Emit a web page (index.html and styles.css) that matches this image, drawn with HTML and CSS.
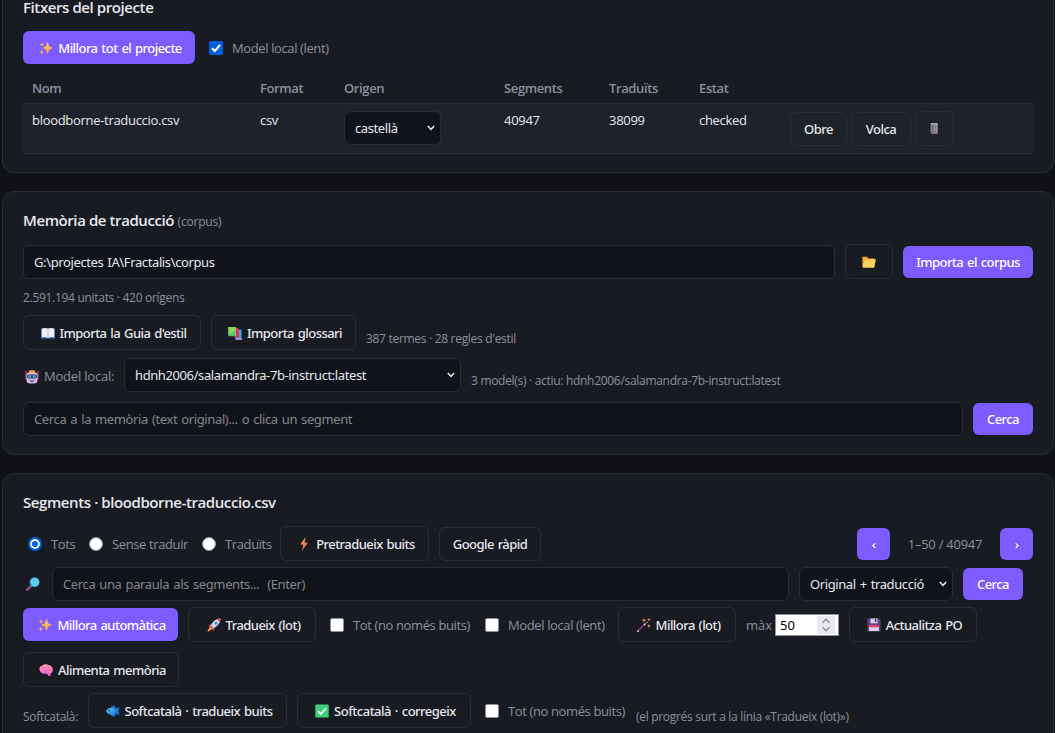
FILE: index.html
```html
<!DOCTYPE html>
<html lang="ca">
<head>
<meta charset="utf-8">
<title>Fractalis</title>
<link rel="stylesheet" href="styles.css">
</head>
<body>
<svg class="defs" width="0" height="0" aria-hidden="true">
  <defs>
    <linearGradient id="gold" x1="0" y1="0" x2="0" y2="1"><stop offset="0" stop-color="#ffce4d"/><stop offset="1" stop-color="#fb9a55"/></linearGradient>
    <linearGradient id="bolt" x1="0" y1="0" x2="0" y2="1"><stop offset="0" stop-color="#ffb13d"/><stop offset="1" stop-color="#f4504a"/></linearGradient>
    <linearGradient id="pink" x1="0" y1="0" x2="0" y2="1"><stop offset="0" stop-color="#ff9fb4"/><stop offset="1" stop-color="#f45fd0"/></linearGradient>
    <linearGradient id="blue" x1="0" y1="0" x2="1" y2="1"><stop offset="0" stop-color="#4fc3f7"/><stop offset="1" stop-color="#1e78d8"/></linearGradient>
  </defs>
  <symbol id="sparkles" viewBox="0 0 14 14"><g fill="url(#gold)"><path d="M8.600.6 10.200 5.200 14 7 10.200 8.700 8.600 13.200 6.900 8.700 3.200 7 6.900 5.200Z"/><path d="M3 1.2 3.6 3 5.4 3.6 3.6 4.2 3 6 2.4 4.2.6 3.6 2.4 3Z"/><path d="M2.8 8.8 3.5 10.5 5.2 11.1 3.5 11.8 2.8 13.5 2.1 11.8.5 11.1 2.1 10.5Z"/></g></symbol>
  <symbol id="chevron" viewBox="0 0 8 6"><path d="M.8 1 4 4.3 7.2 1" fill="none" stroke="#e6e8ee" stroke-width="1.5"/></symbol>
</svg>

<section class="card card-files">
  <h2 class="title">Fitxers del projecte</h2>
  <div class="row files-actions">
    <button class="btn primary w172"><svg class="ico"><use href="#sparkles"/></svg><span>Millora tot el projecte</span></button>
    <label class="check"><input type="checkbox" class="box" checked><span>Model local (lent)</span></label>
  </div>
  <table class="files">
    <colgroup><col class="c1"><col class="c2"><col class="c3"><col class="c4"><col class="c5"><col class="c6"><col class="c7"></colgroup>
    <thead><tr><th>Nom</th><th>Format</th><th>Origen</th><th>Segments</th><th>Traduïts</th><th>Estat</th><th></th></tr></thead>
    <tbody><tr>
      <td>bloodborne-traduccio.csv</td><td>csv</td>
      <td><div class="select w97"><span>castellà</span><svg class="chev"><use href="#chevron"/></svg></div></td>
      <td>40947</td><td>38099</td><td>checked</td>
      <td><div class="cell-btns"><button class="btn w57">Obre</button><button class="btn w60">Volca</button><button class="btn tall w39"><svg class="ico" viewBox="0 0 14 14"><rect x="2.700" y="1.200" width="7.300" height="10.800" rx="1.200" fill="#77737c"/><path d="M2.800 1.900h7" stroke="#c4c0c7" stroke-width="1.2"/><path d="M4.300 3.300v7.700" stroke="#b452a0" stroke-width="1.400"/><path d="M6.500 3.300V11M8.300 3.300V11" stroke="#a9aaa8" stroke-width=".8"/><path d="M3 3v7" stroke="#41a7b8" stroke-width=".7"/></svg></button></div></td>
    </tr></tbody>
  </table>
</section>

<section class="card card-memory">
  <h2 class="title">Memòria de traducció <small>(corpus)</small></h2>
  <div class="row path-row">
    <input class="field grow" type="text" value="G:\projectes IA\Fractalis\corpus">
    <button class="btn tall w48"><svg class="ico" viewBox="0 0 14 14"><path d="M.4 1.8h4.7l1.4 1.6h6V12H.4Z" fill="#f3a72e"/><path d="M2.3 5.2 7 4.3h6.9L12.1 12.8H.6Z" fill="#ffd161"/></svg></button>
    <button class="btn primary flat w130">Importa el corpus</button>
  </div>
  <p class="note units">2.591.194 unitats · 420 orígens</p>
  <div class="row guide-row">
    <button class="btn tall w178"><svg class="ico" viewBox="0 0 14 14"><path d="M0 3h14v9.6H0Z" fill="#2c7bd0"/><path d="M.8 2.400Q4 1.400 7 2.600q3-1.200 6.200-.2v8.800q-3.200-.8-6.200.5Q4 10.400.8 11.200Z" fill="#f2eef8"/><path d="M7 2.600v9" stroke="#bdb3cd" stroke-width=".8"/></svg><span>Importa la Guia d'estil</span></button>
    <button class="btn tall w145"><svg class="ico" viewBox="0 0 14 14"><path d="M6 4l7.500-.5V13H7Z" fill="#3ba5e8"/><path d="M9 12h5v2H7Z" fill="#9a8bdc"/><path d="M6 2.500 10.300 1.800 11.500 11 7 12Z" fill="#e6305c"/><path d="M0 1h8v9.200H1.500L0 9Z" fill="#5fc46b"/><path d="M1 1h7v3L2 8Z" fill="#8fd65b"/></svg><span>Importa glossari</span></button>
    <span class="note sink">387 termes · 28 regles d'estil</span>
  </div>
  <div class="row model-row">
    <span class="model-label"><svg class="ico" viewBox="0 0 14 14"><path d="M1 1v5M13 1v5" stroke="#d63d6a" stroke-width="1.300"/><rect x=".3" y="5.500" width="13.400" height="4" rx="1.500" fill="#d3416f"/><rect x="1.500" y="2" width="11" height="11.500" rx="3.500" fill="#cdb9e2"/><rect x="4" y=".3" width="6" height="2.700" rx="1.200" fill="#f5a63b"/><rect x="2" y="4.500" width="10" height="4" rx="1.800" fill="#35466f"/><circle cx="4.800" cy="6.400" r="1.200" fill="#4dc8ef"/><circle cx="9.200" cy="6.400" r="1.200" fill="#4dc8ef"/><path d="M5 11h4" stroke="#453450" stroke-width="1.200"/></svg><span>Model local:</span></span>
    <div class="select w337"><span>hdnh2006/salamandra-7b-instruct:latest</span><svg class="chev"><use href="#chevron"/></svg></div>
    <span class="note sink">3 model(s) · actiu: hdnh2006/salamandra-7b-instruct:latest</span>
  </div>
  <div class="row">
    <input class="field grow" type="text" placeholder="Cerca a la memòria (text original)... o clica un segment">
    <button class="btn primary flat w60">Cerca</button>
  </div>
</section>

<section class="card card-segments">
  <h2 class="title">Segments · bloodborne-traduccio.csv</h2>
  <div class="row filter-row">
    <label class="check w51"><input type="radio" name="f" class="dot" checked><span>Tots</span></label>
    <label class="check w103"><input type="radio" name="f" class="dot"><span>Sense traduir</span></label>
    <label class="check w73"><input type="radio" name="f" class="dot"><span>Traduïts</span></label>
    <button class="btn tall w149"><svg class="ico" viewBox="0 0 14 14"><path d="M8.700 0 3.200 7.500h3L5 14l5.800-8.300H7.500Z" fill="url(#bolt)"/></svg><span>Pretradueix buits</span></button>
    <button class="btn w102">Google ràpid</button>
    <span class="grow"></span>
    <div class="pager"><button class="btn primary flat w33">‹</button><span>1–50 / 40947</span><button class="btn primary flat w33">›</button></div>
  </div>
  <div class="row search-row">
    <svg class="ico lens" viewBox="0 0 14 14"><path d="M6 8 1.200 12.800" stroke="#80508d" stroke-width="2.600" stroke-linecap="round"/><circle cx="8.600" cy="5.300" r="5" fill="#3b94bd"/><circle cx="8.800" cy="5.100" r="4.200" fill="#5fcdec"/></svg>
    <input class="field grow" type="text" placeholder="Cerca una paraula als segments...  (Enter)">
    <div class="select w154"><span>Original + traducció</span><svg class="chev"><use href="#chevron"/></svg></div>
    <button class="btn primary flat w60">Cerca</button>
  </div>
  <div class="row batch-row">
    <button class="btn primary w155"><svg class="ico"><use href="#sparkles"/></svg><span>Millora automàtica</span></button>
    <button class="btn tall w128"><svg class="ico" viewBox="0 0 14 14"><path d="M4 6 1 7.500 3 9ZM8 10l-1.500 3.300L5 11Z" fill="#cc3158"/><path d="M13.600.4C9 .4 5 3.500 3 9l2 2c5-2 8.600-6 8.600-10.600Z" fill="#d9d2e3"/><path d="M13.600.4 9.900 1.400l2.800 2.700Z" fill="#ef3e68"/><circle cx="9" cy="5.300" r="1.500" fill="#3c8fd0"/><path d="M3 8.500 5.300 11 1 13.700l-.5-.5Z" fill="#ff9a34"/><path d="M5.500 8.500 4 10" stroke="#cc3158" stroke-width="1.500"/></svg><span>Tradueix (lot)</span></button>
    <label class="check w145"><input type="checkbox" class="box"><span>Tot (no només buits)</span></label>
    <label class="check w127"><input type="checkbox" class="box"><span>Model local (lent)</span></label>
    <button class="btn tall w118"><svg class="ico" viewBox="0 0 14 14"><path d="M.8 13.200 8 6" stroke="#7d397e" stroke-width="1.700"/><path d="M.3 13.700 1.500 12.500M7 7l1.500-1.500" stroke="#d5cadb" stroke-width="1.700"/><g fill="#f3a650"><path d="m7 0 .6 1.700 1.700.5-1.700.6L7 4.500l-.6-1.700-1.700-.6 1.700-.5ZM12 0l.5 1.300 1.300.5-1.300.5L12 3.600l-.5-1.300-1.300-.5 1.300-.5ZM11.800 6l.6 1.400 1.500.5-1.500.6-.6 1.500-.5-1.500-1.500-.6 1.500-.5Z"/><circle cx="10" cy="4.500" r=".8"/></g></svg><span>Millora (lot)</span></button>
    <label class="max"><span>màx</span><span class="number"><span>50</span><span class="spin"><svg viewBox="0 0 18 18"><path d="M5.500 6.700 9 3.300l3.500 3.400M5.500 11.300 9 14.700l3.500-3.400" fill="none" stroke="#8f8f9d" stroke-width="1.400"/></svg></span></span></label>
    <button class="btn tall w128"><svg class="ico" viewBox="0 0 14 14"><path d="M.5.500h11.500L13.500 2v11.500H.5Z" fill="#5b4388"/><path d="M3.500.5h7v4.800h-7Z" fill="#d8d0e4"/><path d="M7.800 1h1.600v3H7.800Z" fill="#453264"/><path d="M2 7h10v6H2Z" fill="#d9cfe8"/><path d="M2 7h10v2.300H2Z" fill="#e13e6a"/></svg><span>Actualitza PO</span></button>
    <button class="btn tall w156"><svg class="ico" viewBox="0 0 14 14"><path d="M1 8C-.5 5 1 3.200 3 2.700 5 .9 8 .9 9.500 1.900c2.500 0 4 2.500 4.300 4.600.2 2.500-1 3.600-2.300 3.900L11.300 13 9 12.500 8 10.500C4.500 11.200 2 10.500 1 8Z" fill="url(#pink)"/><path d="M3 5.500Q5 3.500 6.500 5M7.500 3Q10 3 10.500 5.500M5 8q2 1 4-1t3 1" stroke="#e45aae" stroke-width=".6" fill="none"/></svg><span>Alimenta memòria</span></button>
  </div>
  <div class="row soft-row">
    <span class="note sink w55">Softcatalà:</span>
    <button class="btn tall wide-text w199"><svg class="ico" viewBox="0 0 14 14"><path d="M5 2.800 8 1.300l1.800 2.900L13.500 3l-.9 4 1.100 4L10 10l-2 3L5 11.500Z" fill="#1b72cf"/><path d="M0 7.200C1.500 3.500 7 2 11 7.200 7 12.200 2 11.500 0 7.200Z" fill="url(#blue)"/><circle cx="3.200" cy="6.500" r=".8" fill="#17304f"/></svg><span>Softcatalà · tradueix buits</span></button>
    <button class="btn tall wide-text w174"><svg class="ico" viewBox="0 0 14 14"><rect x=".3" y=".5" width="13.400" height="13" rx="1" fill="#3ccf7c"/><path d="M3 7.200 5.800 10 11 4.300" fill="none" stroke="#fff" stroke-width="1.700"/></svg><span>Softcatalà · corregeix</span></button>
    <label class="check w145"><input type="checkbox" class="box"><span>Tot (no només buits)</span></label>
    <span class="note sink">(el progrés surt a la línia «Tradueix (lot)»)</span>
  </div>
</section>
</body>
</html>
```
FILE: styles.css
```css
* { box-sizing: border-box; }
html { overflow: hidden; background: #101114; }
body {
  margin: 0; padding: 0 1px 0 2px; height: 733px; overflow: hidden;
  display: flex; flex-direction: column; gap: 18px;
  background: #101114; color: #e6e8ee;
  font: 13px/18px "Open Sans", "Noto Sans", sans-serif;
}
.defs { position: absolute; }
.card { flex: none; border: 1px solid #2a2d36; border-radius: 12px; background: #191b22; padding: 0 20px; }
.card-files { height: 173px; border-top: 0; border-radius: 0 0 12px 12px; }
.card-memory { height: 264px; padding-top: 17px; }
.card-segments { height: 280px; padding-top: 17px; }
.title { margin: 0; font-size: 15px; line-height: 22px; font-weight: 600; letter-spacing: -.41px; }
.title small { font-size: 12px; font-weight: 400; color: #8b90a0; letter-spacing: -.2px; }
.card-files .title { height: 31px; line-height: 15px; }
.row { display: flex; align-items: center; gap: 10px; }
.grow { flex: 1; min-width: 0; }

.btn {
  flex: none; display: inline-flex; align-items: center; justify-content: center; gap: 5px;
  height: 34px; padding: 0; border: 1px solid #2a2d36; border-radius: 6px;
  background: transparent; color: #e6e8ee; white-space: nowrap;
  font: 500 13px/18px "Noto Sans", sans-serif; letter-spacing: -.55px; word-spacing: 1px;
}
.btn.tall { height: 35px; }
.btn.wide-text { letter-spacing: -.5px; }
.btn.primary { height: 33px; border: 0; background: #7c5cff; color: #fff; }
.btn.flat { height: 32px; }
.ico { flex: none; width: 14px; height: 14px; margin-top: 1px; }
.btn .ico:not(:only-child) { margin-left: 3px; }

.field {
  height: 34px; padding: 0 10px; border: 1px solid #2a2d36; border-radius: 6px;
  background: #10131a; color: #e6e8ee; font: 13px/18px "Noto Sans", sans-serif; letter-spacing: -.38px; word-spacing: 1px;
}
.field::placeholder { color: #84868b; opacity: 1; white-space: pre; }
.select {
  flex: none; display: flex; align-items: center; justify-content: space-between;
  height: 34px; padding: 0 5px 0 10px; border: 1px solid #2a2d36; border-radius: 6px;
  background: #10131a; white-space: nowrap; font: 13px/18px "Noto Sans", sans-serif; letter-spacing: -.4px; word-spacing: 1px;
}
.chev { width: 8px; height: 6px; flex: none; }

.check { flex: none; display: flex; align-items: center; gap: 9px; color: #8b90a0; white-space: nowrap; letter-spacing: -.38px; }
.box, .dot { appearance: none; flex: none; width: 14px; height: 14px; margin: 0 0 0 4px; background: #fff; border: 1px solid #8f8f9d; }
.box { border-radius: 2px; }
.box:checked {
  border: 0;
  background: #0060df url("data:image/svg+xml,%3Csvg xmlns='http://www.w3.org/2000/svg' viewBox='0 0 14 14'%3E%3Cpath d='M3 7.300 5.800 10 11 4' fill='none' stroke='white' stroke-width='2'/%3E%3C/svg%3E");
}
.dot { border-radius: 50%; margin-left: 5px; }
.dot:checked { border: 2px solid #0060df; background: #0060df; box-shadow: inset 0 0 0 2px #fff; }
.note { color: #8b90a0; font-size: 12px; line-height: 16px; letter-spacing: -.3px; white-space: nowrap; margin: 0; }
.row .sink { padding-top: 12px; }

.files { table-layout: fixed; width: 1010px; margin-top: 12px; border-collapse: collapse; }
.files th { height: 27px; padding: 0 9px 2px; text-align: left; font-weight: 600; color: #8b90a0; vertical-align: middle; letter-spacing: -.38px; }
.files td { height: 50px; padding: 7px 9px 0; vertical-align: top; white-space: nowrap; letter-spacing: -.3px; }
.files tbody tr { background: #1e222a; border-top: 1px solid #2a2d36; border-bottom: 1px solid #2a2d36; }
.c1 { width: 228px; } .c2 { width: 84px; } .c3 { width: 160px; } .c4 { width: 105px; }
.c5 { width: 90px; } .c6 { width: 91px; } .c7 { width: 252px; }
.cell-btns { display: flex; align-items: flex-end; gap: 4px; }

.path-row { margin-top: 11px; height: 35px; }
.units { margin-top: 11px; }
.guide-row { margin-top: 9px; }
.model-row { margin: 8px 0 10px; }
.model-label { width: 91px; padding: 2px 0 0 2px; display: flex; align-items: center; gap: 5px; color: #8b90a0; white-space: nowrap; letter-spacing: -.2px; }

.filter-row { margin-top: 13px; height: 35px; }
.pager { display: flex; align-items: center; justify-content: space-between; width: 176px; color: #8b90a0; letter-spacing: -.25px; }
.search-row { margin-top: 6px; padding-right: 10px; }
.lens { margin: 0 2px 0 3px; }
.batch-row { flex-wrap: wrap; margin-top: 6px; }
.max { flex: none; width: 93px; display: flex; align-items: center; justify-content: space-between; color: #8b90a0; }
.number { display: flex; align-items: center; justify-content: space-between; width: 64px; height: 22px; padding: 0 3px 0 4px; background: #fff; color: #000; border: 1px solid #8f8f9d; font: 13px/18px "Noto Sans", sans-serif; }
.spin { width: 18px; height: 18px; background: #e9e9ed; }
.spin svg { display: block; }
.soft-row { margin-top: 6px; }

.w33 { width: 33px; } .w39 { width: 39px; } .w48 { width: 48px; } .w51 { width: 51px; } .w55 { width: 55px; }
.w57 { width: 57px; } .w60 { width: 60px; } .w73 { width: 73px; } .w97 { width: 97px; } .w102 { width: 102px; }
.w103 { width: 103px; } .w118 { width: 118px; } .w127 { width: 127px; } .w128 { width: 128px; } .w130 { width: 130px; }
.w145 { width: 145px; } .w149 { width: 149px; } .w154 { width: 154px; } .w155 { width: 155px; } .w156 { width: 156px; }
.w172 { width: 172px; } .w174 { width: 174px; } .w178 { width: 178px; } .w199 { width: 199px; } .w337 { width: 337px; }
```
